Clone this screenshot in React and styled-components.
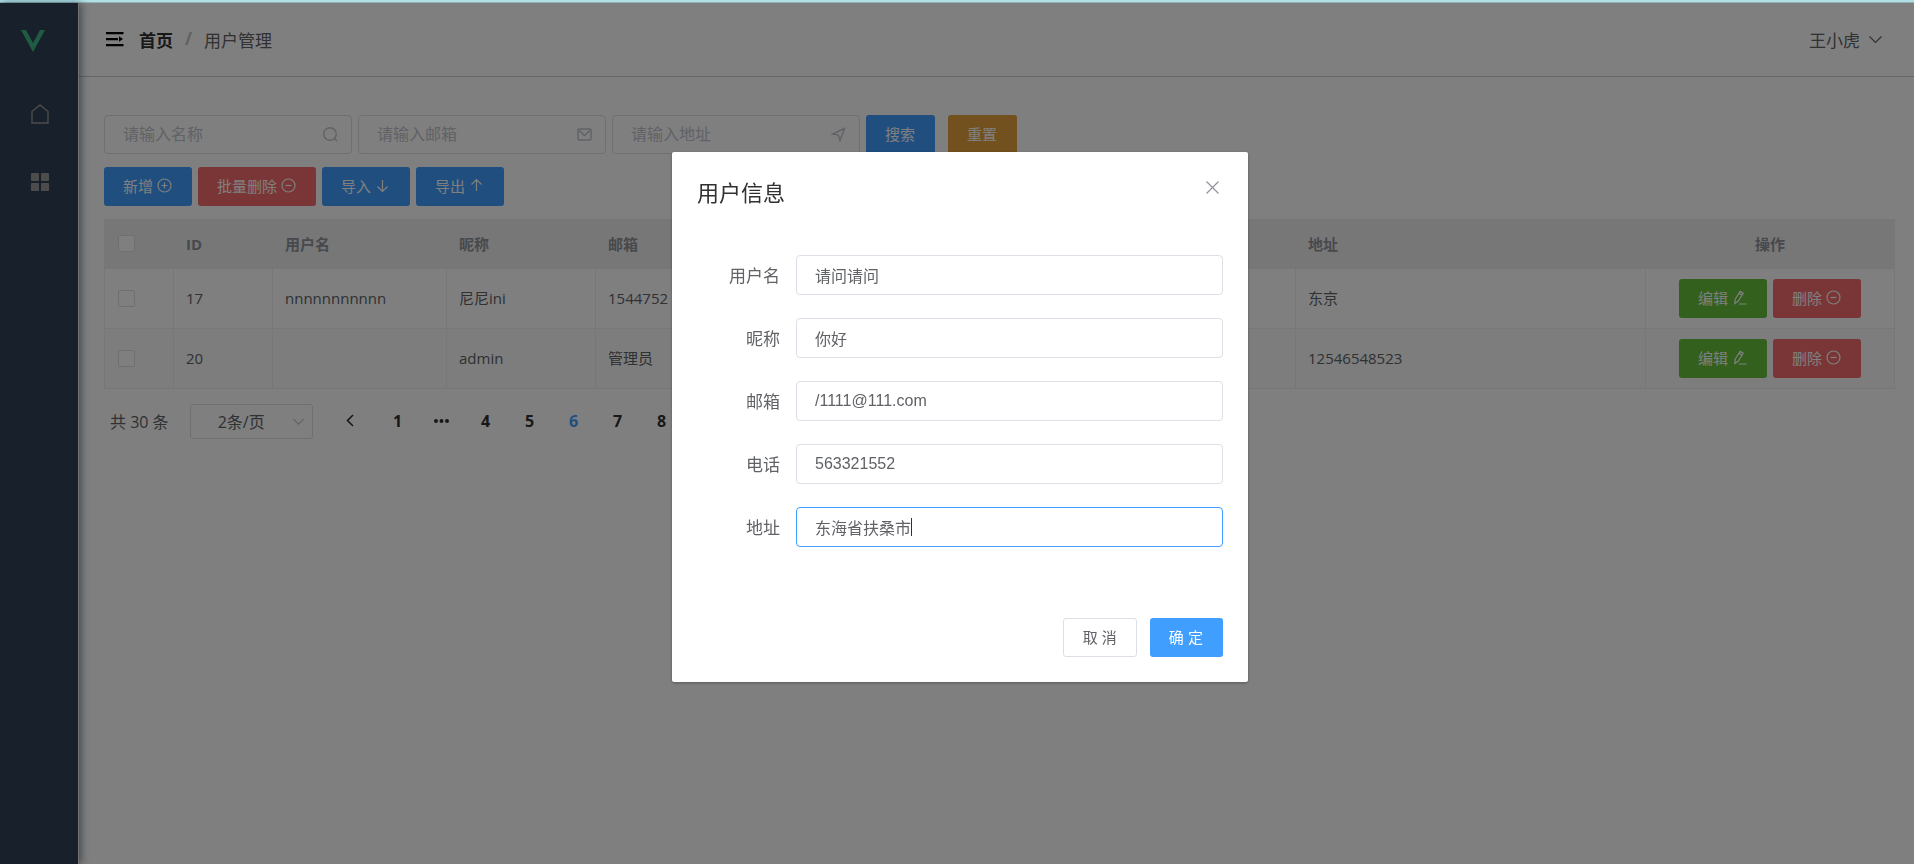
import React, { useState } from 'react'
import styled, { createGlobalStyle } from 'styled-components'

const users = [
    { id: 17, username: 'nnnnnnnnnnn', nickname: '尼尼ini', email: '1544752', phone: '', address: '东京' },
    { id: 20, username: '', nickname: 'admin', email: '管理员', phone: '', address: '12546548523' },
]

const fields = [
    { key: 'username', label: '用户名' },
    { key: 'nickname', label: '昵称' },
    { key: 'email', label: '邮箱' },
    { key: 'phone', label: '电话' },
    { key: 'address', label: '地址' },
]

const searches = [
    { key: 'name', text: '请输入名称', icon: 'search' },
    { key: 'mail', text: '请输入邮箱', icon: 'message' },
    { key: 'addr', text: '请输入地址', icon: 'position' },
]

const pages = ['1', 'more', '4', '5', '6', '7', '8']

const shapes = {
    search: <><circle cx="7" cy="7" r="6.3" /><path d="M11.5 11.5 14 14" /></>,
    message: <><rect x="1" y="2" width="13" height="11" rx="1" /><path d="M2 3.5 7.5 8.5 13 3.5" /></>,
    position: <path d="M13.5 1.5 1.5 7 7.3 8 9 13.5Z" />,
    plus: <><circle cx="7.5" cy="7.5" r="6.5" /><path d="M4.5 7.5h6M7.5 4.5v6" /></>,
    minus: <><circle cx="7.5" cy="7.5" r="6.5" /><path d="M4.5 7.5h6" /></>,
    bottom: <path d="M7.5 2v11.5M2.5 8.5l5 5 5-5" />,
    top: <path d="M7.5 13V1.5M2.5 6.5l5-5 5 5" />,
    edit: <path d="M3.3 9 8.2 1.4 11.2 3.3 6.3 11 2.8 13.4ZM7 3.3l3 1.9M7 14h7.5" />,
    down: <path d="M1.5 4.5l6 6 6-6" />,
    left: <path d="M10 2 4.5 7.5 10 13" />,
    close: <path d="M1.5 1.5l12 12M13.5 1.5l-12 12" />,
}

const Icon = ({ name, size = 15, width = 1.2 }) => (
    <svg width={size} height={size} viewBox="0 0 15 15" fill="none" stroke="currentColor" strokeWidth={width} aria-hidden="true">
        {shapes[name]}
    </svg>
)

export default function App() {
    const [open, setOpen] = useState(true)
    const [focused, setFocused] = useState('address')
    const [form, setForm] = useState({
        username: '请问请问',
        nickname: '你好',
        email: '/1111@111.com',
        phone: '563321552',
        address: '东海省扶桑市',
    })

    return (
        <>
            <GlobalStyle />
            <TopLine />
            <Layout>
                <Sidebar>
                    <Logo viewBox="0 0 24 22" aria-hidden="true">
                        <path d="M0 0h5l7 13 7-13h5L12 22Z" fill="#41b883" />
                    </Logo>
                    <MenuLink href="#home" aria-label="首页">
                        <svg width="18" height="20" viewBox="0 0 18 20" fill="none" stroke="currentColor" strokeWidth="1.4">
                            <path d="M1 19V7.5L9 1l8 6.5V19Z" />
                        </svg>
                    </MenuLink>
                    <MenuLink href="#system" aria-label="系统管理">
                        <svg width="18" height="18" viewBox="0 0 18 18" fill="currentColor">
                            <rect width="8" height="8" rx="1" />
                            <rect x="10" width="8" height="8" rx="1" />
                            <rect y="10" width="8" height="8" rx="1" />
                            <rect x="10" y="10" width="8" height="8" rx="1" />
                        </svg>
                    </MenuLink>
                </Sidebar>
                <Content>
                    <Header>
                        <FoldButton aria-label="收起菜单">
                            <svg width="18" height="16" viewBox="0 0 18 16" fill="currentColor">
                                <path d="M0 1h17.5v2.2H0ZM0 7h12v2.2H0ZM0 13h17.5v2.2H0ZM13 5.3 17 8l-4 2.8Z" />
                            </svg>
                        </FoldButton>
                        <Crumbs>
                            <a href="#home">首页</a>
                            <i>/</i>
                            <span>用户管理</span>
                        </Crumbs>
                        <UserMenu>王小虎 <Icon name="down" /></UserMenu>
                    </Header>
                    <Main>
                        <Toolbar>
                            {searches.map(s => (
                                <SearchBox key={s.key}>
                                    <input placeholder={s.text} aria-label={s.text} />
                                    <Icon name={s.icon} width={1.4} />
                                </SearchBox>
                            ))}
                            <Button $color="#409eff">搜索</Button>
                            <ResetButton $color="#e6a23c">重置</ResetButton>
                        </Toolbar>
                        <Toolbar>
                            <Button $color="#409eff" onClick={() => setOpen(true)}>新增 <Icon name="plus" /></Button>
                            <Button $color="#f56c6c">批量删除 <Icon name="minus" /></Button>
                            <Button $color="#409eff">导入 <Icon name="bottom" /></Button>
                            <Button $color="#409eff">导出 <Icon name="top" /></Button>
                        </Toolbar>
                        <Table>
                            <colgroup>
                                <Col $w={69} /><Col $w={99} /><Col $w={174} /><Col $w={149} />
                                <col /><col /><col />
                                <Col $w={249} />
                            </colgroup>
                            <thead>
                                <tr>
                                    <th><CheckBox type="checkbox" aria-label="全选" /></th>
                                    <th>ID</th>
                                    <th>用户名</th>
                                    <th>昵称</th>
                                    <th>邮箱</th>
                                    <th>电话</th>
                                    <th>地址</th>
                                    <th>操作</th>
                                </tr>
                            </thead>
                            <tbody>
                                {users.map(u => (
                                    <tr key={u.id}>
                                        <td><CheckBox type="checkbox" aria-label={'选择 ' + u.id} /></td>
                                        <td>{u.id}</td>
                                        <td>{u.username}</td>
                                        <td>{u.nickname}</td>
                                        <td>{u.email}</td>
                                        <td>{u.phone}</td>
                                        <td>{u.address}</td>
                                        <td>
                                            <Actions>
                                                <Button $color="#67c23a" onClick={() => setOpen(true)}>编辑 <Icon name="edit" /></Button>
                                                <Button $color="#f56c6c">删除 <Icon name="minus" /></Button>
                                            </Actions>
                                        </td>
                                    </tr>
                                ))}
                            </tbody>
                        </Table>
                        <Pagination>
                            <Total>共 30 条</Total>
                            <PageSize>
                                <select aria-label="每页条数" defaultValue="2">
                                    <option value="2">2条/页</option>
                                    <option value="5">5条/页</option>
                                    <option value="10">10条/页</option>
                                </select>
                                <Icon name="down" size={13} width={1.4} />
                            </PageSize>
                            <PrevButton aria-label="上一页"><Icon name="left" width={1.6} /></PrevButton>
                            {pages.map((p, i) => (
                                <PageButton key={i} $active={p === '6'} aria-label={p === 'more' ? '更多' : p}>
                                    {p === 'more' ? <Dots /> : p}
                                </PageButton>
                            ))}
                        </Pagination>
                    </Main>
                </Content>
            </Layout>
            {open && (
                <Overlay>
                    <Dialog role="dialog" aria-label="用户信息">
                        <DialogHeader>
                            <h2>用户信息</h2>
                            <CloseButton aria-label="关闭" onClick={() => setOpen(false)}><Icon name="close" /></CloseButton>
                        </DialogHeader>
                        <Form>
                            {fields.map(f => (
                                <Field key={f.key}>
                                    <label htmlFor={f.key}>{f.label}</label>
                                    <InputBox>
                                        <input
                                            id={f.key}
                                            value={form[f.key]}
                                            autoFocus={f.key === 'address'}
                                            autoComplete="off"
                                            onFocus={() => setFocused(f.key)}
                                            onChange={e => setForm({ ...form, [f.key]: e.target.value })}
                                        />
                                        {/* the address is all full-width characters, one em each */}
                                        {f.key === 'address' && focused === 'address' && (
                                            <Caret style={{ left: 19 + form.address.length * 16 }} />
                                        )}
                                    </InputBox>
                                </Field>
                            ))}
                        </Form>
                        <DialogFooter>
                            <PlainButton onClick={() => setOpen(false)}>取 消</PlainButton>
                            <Button $color="#409eff" onClick={() => setOpen(false)}>确 定</Button>
                        </DialogFooter>
                    </Dialog>
                </Overlay>
            )}
        </>
    )
}

const Dots = () => (
    <svg width="15" height="15" viewBox="0 0 15 15" fill="currentColor" aria-hidden="true">
        <circle cx="2" cy="8" r="2" />
        <circle cx="7.5" cy="8" r="2" />
        <circle cx="13" cy="8" r="2" />
    </svg>
)

const GlobalStyle = createGlobalStyle`
    * {
        box-sizing: border-box;
    }

    body {
        margin: 0;
        background: #fff;
        color: #606266;
        font-family: "Open Sans", "Noto Sans CJK SC", sans-serif;
        font-size: 15px;
    }

    button, input, select {
        font-family: "Liberation Sans", "Noto Sans CJK SC", sans-serif;
    }

    button {
        cursor: pointer;
    }
`

const TopLine = styled.div`
    height: 3px;
    background: #b0e0e6;
    border-bottom: 1px solid #8fb0b4;
`

const Layout = styled.div`
    display: flex;
    min-height: calc(100vh - 3px);
`

const Sidebar = styled.nav`
    display: flex;
    flex-direction: column;
    align-items: center;
    width: 79px;
    flex-shrink: 0;
    background: #304156;
    border-right: 1px solid #e6e6e6;
    box-shadow: 2px 0 8px rgba(0, 21, 41, 0.5);
    z-index: 1;
`

const Logo = styled.svg`
    width: 24px;
    height: 22px;
    margin: 27px 12px 28px 0;
`

const MenuLink = styled.a`
    display: flex;
    align-items: center;
    justify-content: center;
    width: 100%;
    height: 68px;
    padding-left: 1px;
    color: #999;
`

const Content = styled.div`
    flex: 1;
    min-width: 0;
`

const Header = styled.header`
    display: flex;
    align-items: center;
    height: 74px;
    padding: 0 31px 1px 27px;
    border-bottom: 1px solid #ccc;
    font-size: 17px;
`

const FoldButton = styled.button`
    display: flex;
    padding: 0;
    border: 0;
    background: none;
    color: #000;
`

const Crumbs = styled.div`
    display: flex;
    gap: 12px;
    margin-left: 15px;

    a {
        color: #303133;
        font-weight: 700;
        text-decoration: none;
    }

    i {
        color: #c0c4cc;
        font-style: normal;
        font-weight: 700;
    }
`

const UserMenu = styled.button`
    display: flex;
    align-items: center;
    gap: 8px;
    margin-left: auto;
    padding: 0;
    border: 0;
    background: none;
    color: #606266;
    font-size: 17px;
`

const Main = styled.main`
    padding: 38px 19px 20px 25px;
`

const Toolbar = styled.div`
    display: flex;
    align-items: center;
    gap: 6px;
    margin-bottom: 13px;
`

const SearchBox = styled.div`
    display: flex;
    align-items: center;
    width: 248px;
    height: 39px;
    padding: 0 13px 0 18px;
    border: 1px solid #dcdfe6;
    border-radius: 4px;
    color: #c0c4cc;

    input {
        flex: 1;
        min-width: 0;
        padding: 0;
        border: 0;
        outline: 0;
        background: none;
        color: #606266;
        font-size: 16px;
    }

    input::placeholder {
        color: #c0c4cc;
    }
`

const Button = styled.button`
    display: flex;
    align-items: center;
    justify-content: center;
    gap: 4px;
    height: 39px;
    padding: 0 19px 3px;
    border: 0;
    border-right: 1px solid ${p => p.$color};
    border-radius: 3px;
    background: ${p => p.$color};
    color: #fff;
    font-size: 15px;
    white-space: nowrap;
`

const ResetButton = styled(Button)`
    margin-left: 7px;
`

const PlainButton = styled(Button)`
    border: 1px solid #dcdfe6;
    background: #fff;
    color: #606266;
`

const Table = styled.table`
    width: 100%;
    table-layout: fixed;
    border-collapse: separate;
    border-spacing: 0;
    border-left: 1px solid #ebeef5;

    th, td {
        height: 60px;
        padding: 0 12px;
        border-right: 1px solid #ebeef5;
        border-bottom: 1px solid #ebeef5;
        text-align: left;
    }

    td:not(:first-child):not(:last-child) {
        padding-bottom: 2px;
    }

    th {
        height: 50px;
        border-color: #eee;
        background: #eee;
        color: #909399;
        font-weight: 700;
    }

    th:last-child {
        text-align: center;
    }

    tbody tr:nth-child(even) {
        background: #fafafa;
    }
`

const Col = styled.col`
    width: ${p => p.$w}px;
`

const CheckBox = styled.input`
    appearance: none;
    display: block;
    width: 17px;
    height: 17px;
    margin: 0 1px;
    border: 1px solid #dcdfe6;
    border-radius: 2px;
    background: #fff;
`

const Actions = styled.div`
    display: flex;
    justify-content: center;
    gap: 6px;
`

const Pagination = styled.div`
    display: flex;
    align-items: center;
    margin-top: 15px;
    padding-left: 6px;
    font-size: 16px;
`

const Total = styled.span`
    padding-bottom: 2px;
`

const PageSize = styled.div`
    display: flex;
    align-items: center;
    width: 123px;
    height: 35px;
    margin: 0 16px 0 21px;
    padding-right: 7px;
    border: 1px solid #dcdfe6;
    border-radius: 3px;
    color: #c0c4cc;

    select {
        appearance: none;
        flex: 1;
        padding: 0 0 0 27px;
        border: 0;
        outline: 0;
        background: none;
        color: #606266;
        font-family: inherit;
        font-size: 16px;
    }
`

const PageButton = styled.button`
    display: flex;
    align-items: center;
    justify-content: center;
    width: 44px;
    height: 35px;
    padding: 0 0 2px;
    border: 0;
    background: none;
    color: ${p => p.$active ? '#409eff' : '#303133'};
    font-family: inherit;
    font-size: 16px;
    font-weight: 700;
`

const PrevButton = styled(PageButton)`
    margin-right: 3px;
`

const Overlay = styled.div`
    position: fixed;
    inset: 3px 0 0;
    z-index: 10;
    padding-left: 6px;
    background: rgba(0, 0, 0, 0.5);
`

const Dialog = styled.section`
    width: 30%;
    min-width: 576px;
    margin: 149px auto 0;
    border-radius: 2px;
    background: #fff;
    box-shadow: 0 1px 3px rgba(0, 0, 0, 0.3);
`

const DialogHeader = styled.div`
    display: flex;
    align-items: flex-start;
    justify-content: space-between;
    padding: 24px 28px 11px 25px;

    h2 {
        margin: 0;
        color: #303133;
        font-size: 22px;
        font-weight: 400;
        line-height: 32px;
    }
`

const CloseButton = styled.button`
    display: flex;
    padding: 4px 0;
    border: 0;
    background: none;
    color: #909399;
`

const Form = styled.div`
    display: grid;
    gap: 23px;
    padding: 36px 25px;
`

const Field = styled.div`
    display: flex;
    align-items: center;

    label {
        width: 99px;
        padding: 0 16px 2px 0;
        flex-shrink: 0;
        text-align: right;
        font-size: 17px;
    }
`

const InputBox = styled.div`
    position: relative;
    display: flex;
    flex: 1;
    min-width: 0;

    input {
        width: 100%;
        height: 40px;
        padding: 0 18px;
        border: 1px solid #dcdfe6;
        border-radius: 4px;
        outline: 0;
        background: #fff;
        color: #606266;
        font-size: 16px;
        caret-color: transparent;
    }

    input:focus {
        border-color: #409eff;
    }
`

const Caret = styled.span`
    position: absolute;
    top: 11px;
    width: 1px;
    height: 18px;
    background: #303133;
`

const DialogFooter = styled.div`
    display: flex;
    justify-content: flex-end;
    gap: 13px;
    padding: 35px 25px 25px;
`
